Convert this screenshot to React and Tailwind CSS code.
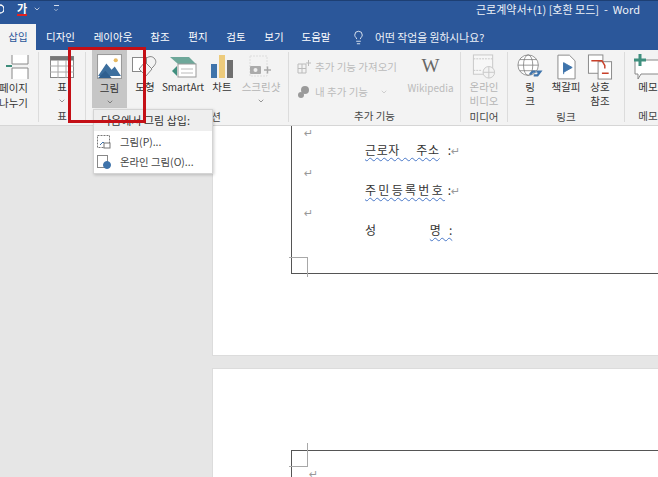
import { ChevronDown, Lightbulb } from "lucide-react"

const font = { fontFamily: "'Noto Sans CJK KR', 'Noto Sans', sans-serif" }

const tabs = [
  ["디자인", "w-[49px]"],
  ["레이아웃", "w-[56px]"],
  ["참조", "w-[38px]"],
  ["편지", "w-[38px]"],
  ["검토", "w-[38px]"],
  ["보기", "w-[38px]"],
  ["도움말", "w-[46px]"],
]

function Sep() {
  return <div className="w-px h-[70px] mt-[2px] bg-[#dcdcdc] shrink-0" />
}

function Group({ width, label, children }) {
  return (
    <div className={`${width} shrink-0 flex flex-col h-full relative`}>
      <div className="h-[58px] flex">{children}</div>
      <div className="h-[18px] mt-auto text-center text-[10.5px] leading-[18px] text-[#444] whitespace-nowrap">{label}</div>
    </div>
  )
}

function Big({ width, icon, lines, chevron, disabled }) {
  return (
    <div className={`${width} shrink-0 flex flex-col items-center ${disabled ? "text-[#b5b5b5]" : "text-[#333]"}`}>
      <div className="h-[27px] mt-[3px] flex items-center justify-center">{icon}</div>
      <div className="text-[10.5px] leading-[14px] text-center whitespace-nowrap">
        {lines.map((l, i) => <div key={i}>{l}</div>)}
      </div>
      {chevron && <ChevronDown size={8} className="mt-[3px] text-[#666]" />}
    </div>
  )
}

function PictureIcon({ size = 25 }) {
  return (
    <svg width={size} height={size} viewBox="0 0 24 24">
      <rect x="0.5" y="0.5" width="23" height="23" fill="#fff" stroke="#9a9a9a" />
      <circle cx="18" cy="6" r="2" fill="#e8b960" />
      <path d="M1 21 L9 9 L14 15 L17 12 L23 21 Z" fill="#3d6f9e" />
      <path d="M1 23 L8 16 L14 23 Z" fill="#2f5f8f" />
    </svg>
  )
}

function ReturnMark() {
  return <span className="text-[11px] text-[#999]" style={{ fontFamily: "'DejaVu Sans', sans-serif" }}>↵</span>
}

function Squiggle({ children }) {
  return <span className="underline decoration-wavy decoration-[#4a78c8] decoration-1 underline-offset-2">{children}</span>
}

function DocRow({ children, mark }) {
  return (
    <>
      <div className="h-[20px] pl-[12px] leading-[20px]"><ReturnMark /></div>
      <div className="h-[20px] pl-[73px] leading-[20px] text-[12px] text-[#333] whitespace-pre">{children}{mark && <ReturnMark />}</div>
    </>
  )
}

export default function App() {
  return (
    <div className="w-[658px] h-[477px] overflow-hidden relative bg-[#e6e6e6] flex flex-col" style={font}>
      {/* title bar */}
      <div className="h-[24px] pb-[7px] bg-[#2b579a] border-t border-[#1d3f73] flex items-center text-white shrink-0">
        <svg width="4" height="10" viewBox="0 0 4 10" fill="none" stroke="#fff" strokeWidth="1.300" className="shrink-0">
          <path d="M0 1a4 4 0 0 1 0 8" />
        </svg>
        <span className="ml-[13px] text-[11px] font-bold leading-[12px] border-b-2 border-[#e02020]">가</span>
        <ChevronDown size={8} className="ml-[6px]" />
        <span className="ml-[12px] flex flex-col items-center gap-[1px]">
          <span className="w-[5px] h-px bg-white opacity-80" />
          <ChevronDown size={6} />
        </span>
        <span className="ml-auto mr-[18px] text-[11px] text-[#eef2f8] whitespace-pre">근로계약서+(1) [호환 모드]  -  Word</span>
      </div>

      {/* tabs */}
      <div className="h-[26px] bg-[#2b579a] flex items-stretch text-[10.5px] text-white shrink-0">
        <div className="w-[36px] bg-[#f3f3f3] text-[#2b579a] flex items-center justify-center">삽입</div>
        {tabs.map(([t, w]) => (
          <div key={t} className={`${w} flex items-center justify-center whitespace-nowrap`}>{t}</div>
        ))}
        <div className="flex items-center ml-[12px] gap-[9px] text-[#eef2f8]">
          <Lightbulb size={15} strokeWidth={1.4} />
          <span className="text-[10.8px]">어떤 작업을 원하시나요?</span>
        </div>
      </div>

      {/* ribbon */}
      <div className="h-[76px] bg-[#f3f3f3] border-b border-[#d6d6d6] flex shrink-0 overflow-hidden">
        <Group width="w-[38px] overflow-hidden" label="">
          <div className="w-[28px] shrink-0 flex flex-col items-end text-[10.5px] leading-[14px] text-[#333]">
            <svg width="24" height="26" viewBox="0 0 24 26" className="mt-[4px] -mr-[1px] shrink-0">
              <path d="M7 1v9h16V1M7 25V14h16v11" fill="#fff" stroke="#888" />
              <path d="M1 12h6" stroke="#3d8c7a" strokeWidth="2" />
            </svg>
            <div className="whitespace-nowrap mt-[1px]">페이지</div>
            <div className="whitespace-nowrap mt-[1px]">나누기</div>
          </div>
        </Group>
        <Sep />
        <Group width="w-[46px]" label="표">
          <Big
            width="w-full"
            chevron
            lines={["표"]}
            icon={
              <svg width="24" height="22" viewBox="0 0 24 22">
                <rect x="0.5" y="0.5" width="23" height="21" fill="#fff" stroke="#888" />
                <rect x="0.5" y="0.5" width="23" height="4" fill="#777" />
                <path d="M8 4v18M16 4v18M0 10h24M0 16h24" stroke="#aaa" />
              </svg>
            }
          />
        </Group>
        <Sep />
        <Group width="w-[202px]" label="일러스트레이션">
          <div className="w-[6px] shrink-0" />
          <div className="w-[35px] shrink-0 h-[58px] bg-[#c6c6c6] flex flex-col items-center text-[#333]">
            <div className="mt-[4px] h-[25px]"><PictureIcon /></div>
            <div className="text-[10.5px] leading-[14px] mt-[2px]">그림</div>
            <ChevronDown size={8} className="mt-[3px] text-[#555]" />
          </div>
          <Big
            width="w-[36px]"
            lines={["도형"]}
            icon={
              <svg width="26" height="22" viewBox="0 0 26 22" fill="none" stroke="#888">
                <rect x="0.5" y="1.500" width="14" height="14" fill="#fff" />
                <path d="M14 3c2-3 6-3 8-1 3 3 2 6-1 9l-6 6" />
                <path d="M13 6l7 7-6 7-7-7z" fill="#f3f3f3" />
              </svg>
            }
          />
          <Big
            width="w-[40px]"
            lines={[<span key="s" className="text-[10px]">SmartArt</span>]}
            icon={
              <svg width="28" height="22" viewBox="0 0 28 22">
                <path d="M1 1h19l7 7H9z" fill="#6ea89a" />
                <path d="M3 15l5-5v10z" fill="#3f8f7e" />
                <rect x="9" y="8" width="18" height="13" fill="#fff" stroke="#999" />
                <path d="M12 13h12M12 17h12" stroke="#bbb" />
              </svg>
            }
          />
          <Big
            width="w-[38px]"
            lines={["차트"]}
            icon={
              <svg width="22" height="23" viewBox="0 0 22 23">
                <rect x="0" y="9" width="6" height="14" fill="#3f74ab" />
                <rect x="8" y="0" width="6" height="23" fill="#edcb7c" />
                <rect x="16" y="5" width="6" height="18" fill="#6f6f6f" />
              </svg>
            }
          />
          <Big
            width="w-[40px]"
            disabled
            chevron
            lines={["스크린샷"]}
            icon={
              <svg width="24" height="24" viewBox="0 0 24 24">
                <rect x="1" y="1" width="17" height="20" fill="none" stroke="#ddd" strokeDasharray="2 1" />
                <rect x="1" y="11" width="11" height="8" rx="1" fill="#aaa" />
                <circle cx="6.5" cy="15" r="2" fill="#eee" />
                <path d="M15 15h7M18.5 11.500v7" stroke="#aaa" strokeWidth="1.500" />
              </svg>
            }
          />
        </Group>
        <Sep />
        <Group width="w-[171px]" label="추가 기능">
          <div className="w-[112px] shrink-0 pl-[8px] pt-[4px] text-[10.5px] text-[#bbb] whitespace-nowrap">
            <div className="h-[25px] flex items-center gap-[4px]">
              <svg width="14" height="14" viewBox="0 0 14 14" fill="none" stroke="#bbb" className="shrink-0">
                <path d="M1 4h8v9H1zM1 8.500h8M5 4v9M9 3h5M11.500 0v6" />
              </svg>
              <span>추가 기능 가져오기</span>
            </div>
            <div className="h-[25px] flex items-center gap-[4px]">
              <svg width="14" height="14" viewBox="0 0 14 14" fill="#9a9a9a" className="shrink-0">
                <circle cx="8" cy="5" r="4" />
                <circle cx="4" cy="10" r="3" />
              </svg>
              <span>내 추가 기능</span>
              <ChevronDown size={8} className="ml-[8px]" />
            </div>
          </div>
          <div className="flex-1 flex flex-col items-center text-[#bbb] whitespace-nowrap">
            <span className="text-[19px] leading-[24px] mt-[4px] text-[#666]" style={{ fontFamily: "'Liberation Serif', serif" }}>W</span>
            <span className="text-[10px] leading-[14px] mt-[3px]">Wikipedia</span>
          </div>
        </Group>
        <Sep />
        <Group width="w-[46px]" label="미디어">
          <Big
            width="w-full"
            disabled
            lines={["온라인", "비디오"]}
            icon={
              <svg width="24" height="26" viewBox="0 0 24 27" fill="none" stroke="#c8c8c8">
                <rect x="1" y="1" width="20" height="20" fill="#f7f7f7" />
                <path d="M1 5h20M1 17h9" strokeDasharray="2 1" />
                <circle cx="17" cy="19" r="6" fill="#f3f3f3" />
                <path d="M11 19h12M17 13v12" />
              </svg>
            }
          />
        </Group>
        <Sep />
        <Group width="w-[116px]" label="링크">
          <Big
            width="w-[44px]"
            lines={["링", "크"]}
            icon={
              <svg width="26" height="26" viewBox="0 0 28 28" fill="none" stroke="#777" strokeWidth="0.800">
                <circle cx="12" cy="12" r="11" fill="#fff" />
                <ellipse cx="12" cy="12" rx="5" ry="11" />
                <path d="M1 12h22M3 6h18M3 18h18" />
                <path d="M14 22l3-3h3M21 19h4l-3 4h-4" stroke="#3f74ab" strokeWidth="2.500" />
              </svg>
            }
          />
          <Big
            width="w-[28px]"
            lines={["책갈피"]}
            icon={
              <svg width="19" height="26" viewBox="0 0 20 27">
                <path d="M1 1h12l6 6v19H1z" fill="#fff" stroke="#888" />
                <path d="M7 9v12M7 9l9 5-9 5z" fill="#3f74ab" stroke="#3f74ab" />
              </svg>
            }
          />
          <Big
            width="w-[40px]"
            lines={["상호", "참조"]}
            icon={
              <svg width="26" height="26" viewBox="0 0 26 27" fill="#fff" stroke="#888">
                <rect x="1" y="1" width="15" height="19" />
                <rect x="11" y="8" width="14" height="18" />
                <path d="M4 7h11l3 5v3M15 20h7" stroke="#c8402a" fill="none" strokeWidth="1.500" />
              </svg>
            }
          />
        </Group>
        <Sep />
        <Group width="w-[46px]" label="메모">
          <Big
            width="w-full"
            lines={["메모"]}
            icon={
              <svg width="30" height="26" viewBox="0 0 30 26" fill="none">
                <path d="M2 6h28v14H8l-3 5v-5H2z" fill="#fff" stroke="#888" />
                <path d="M7 0v12M1 6h12" stroke="#3f8f7e" strokeWidth="3" />
              </svg>
            }
          />
        </Group>
      </div>

      {/* document area */}
      <div className="flex-1 pl-[212px] flex flex-col gap-[12px] overflow-hidden">
        <div className="h-[230px] shrink-0 bg-white pl-[78px] border-l border-b border-[#dcdcdc]">
          <div className="h-[148px] flow-root border-l border-b border-[#555] relative">
            <div className="-mt-[6px]">
              <DocRow mark>
                <span className="tracking-[0.6px]"><Squiggle>근로자     주소</Squiggle></span>{"   "}:
              </DocRow>
              <DocRow mark>
                <span className="tracking-[2.3px]"><Squiggle>주민등록번호</Squiggle></span> :
              </DocRow>
              <DocRow>
                성{"                    "}<Squiggle>명   :</Squiggle>
              </DocRow>
            </div>
            <div className="absolute -left-[3px] -bottom-[4px] w-[19px] h-[20px] border-r border-t border-[#a8a8a8]" />
          </div>
        </div>
        <div className="flex-1 bg-white pl-[78px] pt-[81px] border-l border-t border-[#dcdcdc]">
          <div className="h-[40px] border-l border-t border-[#555] relative pl-[17px] pt-[12px] leading-[16px]">
            <div className="absolute -left-[3px] -top-[8px] w-[19px] h-[24px] border-r border-b border-[#a8a8a8]" />
            <ReturnMark />
          </div>
        </div>
      </div>

      {/* dropdown menu */}
      <div className="absolute left-[93px] top-[109px] w-[120px] h-[65px] bg-white border border-[#d4d4d4] shadow-[1px_1px_3px_rgba(0,0,0,0.2)] text-[10.4px] text-[#444]">
        <div className="h-[21px] bg-[#eeeeee] flex items-center pl-[7px] whitespace-nowrap text-[11px] text-[#333]">다음에서 그림 삽입:</div>
        <div className="h-[21px] flex items-center pl-[3px] gap-[9px] whitespace-nowrap">
          <svg width="14" height="14" viewBox="0 0 14 14" fill="none" stroke="#777">
            <rect x="0.500" y="0.500" width="12" height="12" strokeDasharray="2 1" />
            <path d="M3 10l3-3 2 2" stroke="#3f74ab" />
            <rect x="7" y="8" width="6" height="5" fill="#fff" />
          </svg>
          <span>그림(P)...</span>
        </div>
        <div className="h-[19px] flex items-center pl-[3px] gap-[9px] whitespace-nowrap">
          <svg width="14" height="14" viewBox="0 0 14 14" fill="none" stroke="#888">
            <rect x="0.500" y="0.500" width="10" height="12" />
            <circle cx="10" cy="10" r="3.500" fill="#3f74ab" stroke="#3f74ab" />
          </svg>
          <span>온라인 그림(O)...</span>
        </div>
      </div>

      {/* red highlight */}
      <div className="absolute left-[68px] top-[47px] w-[78px] h-[76px] border-[3px] border-[#c40f16]" />
    </div>
  )
}
